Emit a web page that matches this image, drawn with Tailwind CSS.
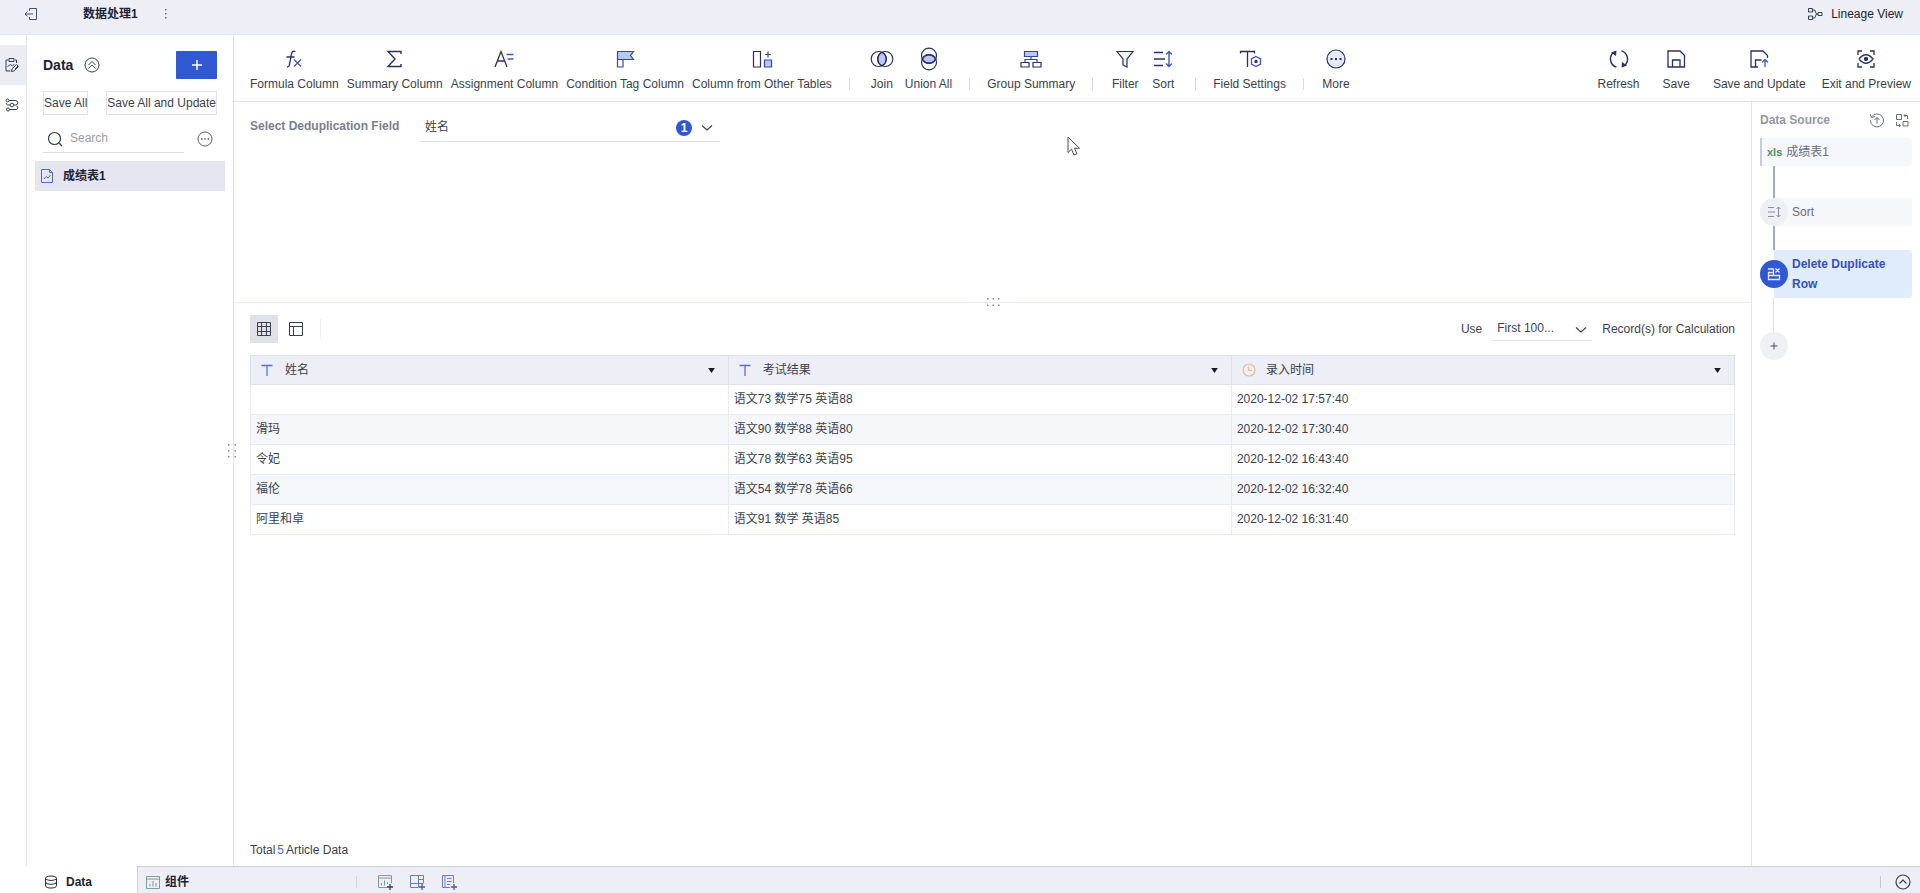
<!DOCTYPE html>
<html lang="zh-CN">
<head>
    <meta charset="UTF-8">
    <meta name="viewport" content="width=device-width, initial-scale=1.0">
    <title>数据处理1</title>
    <script src="https://cdn.jsdelivr.net/npm/@tailwindcss/browser@4"></script>
</head>
<body class="h-screen flex flex-col overflow-hidden bg-white text-xs text-[#3a3f50] font-['Liberation_Sans','Noto_Sans_CJK_SC',sans-serif]">

    <!-- Top Bar -->
    <header class="flex items-center h-[35px] pb-2.5 pt-1 shrink-0 bg-[#edeef6] border-b border-[#e3e5ec]">
        <button class="w-[62px] flex justify-center" aria-label="Back">
            <svg class="w-3.5 h-3.5" viewBox="0 0 14 14" fill="none" stroke="#4a4e5e"><path d="M5.5 4V1.5h7v11h-7V10M1 7h8M3.5 4.5L1 7l2.5 2.5"/></svg>
        </button>
        <h1 class="ml-[21px] font-bold text-[#1c2236]">数据处理1</h1>
        <button class="ml-[22px] w-3" aria-label="Menu">
            <svg class="w-3 h-3" viewBox="0 0 12 12" fill="#6a6e7c"><path d="M5 1h1.500v1.500H5zM5 5h1.500v1.500H5zM5 9h1.500v1.500H5z"/></svg>
        </button>
        <button class="ml-auto mr-[17px] flex items-center gap-2 text-[#1c2236]">
            <svg class="w-4 h-3.5" viewBox="0 0 16 14" fill="none" stroke="#3a3f50"><path d="M1.500 1.500h4v3.500h-4zM1.500 9h4v3.500h-4zM11 5.500h4v3h-4zM5.500 3H7q1.500 0 1.500 2T11 7M5.500 11H7q1.500 0 1.500-2T11 7"/></svg>
            Lineage View
        </button>
    </header>

    <div class="flex-1 flex min-h-0">
        <!-- Icon Rail -->
        <nav class="w-[27px] shrink-0 pt-2.5 border-r border-[#e3e5ec]">
            <button class="w-full h-10 pr-0.5 flex items-center justify-center bg-[#ebecf4]" aria-label="Edit data">
                <svg class="w-3.5 h-4" viewBox="0 0 14 16" fill="none" stroke="#3a3f50"><path d="M3.500 3H1v11h4.500M10 3h1.500v3M4 1.500h5v3H4zM2.500 9.500l3-2 2 1.500 2-2M6.500 14.500l.5-2.500 4.500-4.500 2 2-4.500 4.500zM10 12l3-3"/></svg>
            </button>
            <button class="w-full h-10 pr-0.5 flex items-center justify-center" aria-label="Data flow">
                <svg class="w-3.5 h-3.5" viewBox="0 0 14 14" fill="none" stroke="#3a3f50"><circle cx="2.500" cy="2.500" r="1.500"/><circle cx="7" cy="7" r="1.800"/><circle cx="3" cy="11.500" r="1.500"/><path d="M4 2.500h6.500a2.200 2.200 0 0 1 0 4.500H9M5 7H3a1.500 1.500 0 0 1-1.500-2M4.500 11.500h7a1.800 1.800 0 0 0 0-3.500"/></svg>
            </button>
        </nav>

        <!-- Sidebar -->
        <aside class="relative w-[207px] shrink-0 border-r border-[#e3e5ec]">
            <div class="flex items-center mt-4 mx-4">
                <h2 class="text-sm font-bold text-[#1c2236]">Data</h2>
                <button class="ml-[11px]" aria-label="Collapse">
                    <svg class="w-4 h-4" viewBox="0 0 16 16" fill="none" stroke="#3a3f50"><circle cx="8" cy="8" r="7"/><path d="M4.500 8L8 4.500 11.500 8M4.500 11.500L8 8l3.500 3.500"/></svg>
                </button>
                <button class="ml-auto w-[41px] h-7 flex items-center justify-center rounded-[1px] bg-[#3058d2]" aria-label="Add">
                    <svg class="w-3 h-3" viewBox="0 0 12 12" stroke="#fff" stroke-width="1.500"><path d="M6 1v10M1 6h10"/></svg>
                </button>
            </div>
            <div class="flex justify-between mt-3 mx-4 whitespace-nowrap">
                <button class="h-6 border border-[#dfe1e7]">Save All</button>
                <button class="h-6 border border-[#dfe1e7]">Save All and Update</button>
            </div>
            <div class="flex items-center mt-2.5 ml-4 mr-5">
                <label class="w-[141px] h-7 pl-1 flex items-center gap-[7px] border-b border-[#dcdee3]">
                    <svg class="w-4 h-4 shrink-0" viewBox="0 0 16 16" fill="none" stroke="#3a3f50" stroke-width="1.200"><circle cx="7.500" cy="7.500" r="6"/><path d="M12 12l3 3"/></svg>
                    <input type="text" placeholder="Search" aria-label="Search" class="w-full pb-0.5 outline-none placeholder:text-[#9a9da8]">
                </label>
                <button class="ml-auto" aria-label="More options">
                    <svg class="w-4 h-4" viewBox="0 0 16 16" fill="none" stroke="#5a5e6c"><circle cx="8" cy="8" r="7"/><path d="M4 8h1.500M7.200 8h1.500M10.500 8H12" stroke-width="1.500"/></svg>
                </button>
            </div>
            <a href="#" class="flex items-center gap-[9px] h-[30px] mt-2 mx-2 pl-[5px] bg-[#e4e5ee] font-bold text-[#1c2236]">
                <svg class="w-3.5 h-4" viewBox="0 0 14 16" fill="none" stroke="#5468cc"><path d="M1.500 1.500h8l3 3v10h-11zM9.500 1.500v3h3M4 11l2-2.500 2 1.500 2.500-3"/></svg>
                成绩表1
            </a>
            <!-- Resize grip -->
            <svg class="absolute -right-1 top-[408px] w-2.5 h-4" viewBox="0 0 10 16" fill="#8a8d98"><path d="M1 1h1.500v1.500H1zM1 7h1.500v1.500H1zM1 13h1.500v1.500H1zM7.500 1H9v1.500H7.500zM7.500 7H9v1.500H7.500zM7.500 13H9v1.500H7.500z"/></svg>
        </aside>

        <div class="flex-1 flex flex-col min-w-0">
            <!-- Toolbar -->
            <div class="flex items-end h-[67px] pb-[9px] pl-4 pr-[9px] shrink-0 border-b border-[#e3e5ec] whitespace-nowrap">
                <div class="flex gap-2">
                    <button class="min-w-[30px] flex flex-col items-center gap-[5px]">
                        <svg class="w-6 h-6" viewBox="0 0 24 24" fill="none" stroke="#2a3060" stroke-width="1.300"><path d="M13.500 4.500c-3-1-3.800.5-4.300 3.500L7.500 17.500q-.4 2.500-2.500 2.500M4.500 10h8"/><path d="M12 12.500l7 7M19 12.500l-7 7" stroke="#4058b8"/></svg>
                        Formula Column
                    </button>
                    <button class="min-w-[30px] flex flex-col items-center gap-[5px]">
                        <svg class="w-6 h-6" viewBox="0 0 24 24" fill="none" stroke="#2a3060" stroke-width="1.400"><path d="M18 7V4.500H5L12 12l-7 7.500h13V17"/></svg>
                        Summary Column
                    </button>
                    <button class="min-w-[30px] flex flex-col items-center gap-[5px]">
                        <svg class="w-6 h-6" viewBox="0 0 24 24" fill="none" stroke="#2a3060" stroke-width="1.300"><path d="M3 20L9 4.500 15 20M5.500 14h7.500"/><path d="M14.500 7.500h7M15.500 12h6" stroke="#4058b8"/></svg>
                        Assignment Column
                    </button>
                    <button class="min-w-[30px] flex flex-col items-center gap-[5px]">
                        <svg class="w-6 h-6" viewBox="0 0 24 24" fill="none" stroke="#39489c" stroke-width="1.200"><path d="M4.500 12.500v7.500H10v-7.500"/><path d="M4.500 4.500h16l-3 4 3 4h-16z" fill="#b9c8f8"/></svg>
                        Condition Tag Column
                    </button>
                    <button class="min-w-[30px] flex flex-col items-center gap-[5px]">
                        <svg class="w-6 h-6" viewBox="0 0 24 24" fill="none" stroke="#39489c" stroke-width="1.200"><path d="M3.500 4.500h7V20h-7z" stroke="#2a3060"/><path d="M14.500 13h7v7h-7z" fill="#b9c8f8"/><path d="M18 4.500v6M15 7.500h6"/></svg>
                        Column from Other Tables
                    </button>
                </div>
                <span class="w-px h-3 mb-0.5 mx-[17px] bg-[#d8dae2]"></span>
                <div class="flex gap-2">
                    <button class="min-w-[30px] flex flex-col items-center gap-[5px]">
                        <svg class="w-6 h-6" viewBox="0 0 24 24" fill="none" stroke="#2a3060" stroke-width="1.200"><path d="M12 5.200a7.500 7.500 0 0 1 0 13.600 7.500 7.500 0 0 1 0-13.600" fill="#b9c8f8"/><circle cx="8.700" cy="12" r="7.500"/><circle cx="15.300" cy="12" r="7.500"/></svg>
                        Join
                    </button>
                    <button class="min-w-[30px] flex flex-col items-center gap-[5px]">
                        <svg class="w-6 h-6" viewBox="0 0 24 24" fill="none" stroke="#2a3060" stroke-width="1.200"><path d="M5.200 12a7.500 7.500 0 0 1 13.600 0 7.500 7.500 0 0 1-13.600 0" fill="#b9c8f8"/><circle cx="12" cy="8.700" r="7.500"/><circle cx="12" cy="15.300" r="7.500"/></svg>
                        Union All
                    </button>
                </div>
                <span class="w-px h-3 mb-0.5 mx-[17px] bg-[#d8dae2]"></span>
                <button class="min-w-[30px] flex flex-col items-center gap-[5px]">
                    <svg class="w-6 h-6" viewBox="0 0 24 24" fill="none" stroke="#39489c" stroke-width="1.200"><path d="M5.500 4.500h13v5h-13z" fill="#b9c8f8"/><path d="M2 15.500h8V20H2zM14 15.500h8V20h-8z" stroke="#2a3060"/><path d="M12 9.500v3M6 15.500v-3h12v3"/></svg>
                    Group Summary
                </button>
                <span class="w-px h-3 mb-0.5 mx-[17px] bg-[#d8dae2]"></span>
                <div class="flex gap-2">
                    <button class="min-w-[30px] flex flex-col items-center gap-[5px]">
                        <svg class="w-6 h-6" viewBox="0 0 24 24" fill="none" stroke="#2a3060" stroke-width="1.200"><path d="M4 4.500h16l-6 7.500V20l-4-2v-6z" fill="#f0f3fe"/></svg>
                        Filter
                    </button>
                    <button class="min-w-[30px] flex flex-col items-center gap-[5px]">
                        <svg class="w-6 h-6" viewBox="0 0 24 24" fill="none" stroke="#2a3060" stroke-width="1.400"><path d="M3 5.500h9M3 12h11M3 18.500h9"/><path d="M18 5v14M15 7.500l3-3 3 3M15 16.500l3 3 3-3" stroke="#4058b8"/></svg>
                        Sort
                    </button>
                </div>
                <span class="w-px h-3 mb-0.5 mx-[17px] bg-[#d8dae2]"></span>
                <button class="min-w-[30px] flex flex-col items-center gap-[5px]">
                    <svg class="w-6 h-6" viewBox="0 0 24 24" fill="none" stroke="#2a3060" stroke-width="1.300"><path d="M2.500 6.500v-2h14v2M9.500 4.500V20"/><path d="M18 9.500l4.500 2.500v5L18 19.500 13.500 17v-5z" stroke="#4058b8"/><circle cx="18" cy="14.500" r="1" fill="#2a3060"/></svg>
                    Field Settings
                </button>
                <span class="w-px h-3 mb-0.5 mx-[17px] bg-[#d8dae2]"></span>
                <button class="min-w-[30px] flex flex-col items-center gap-[5px]">
                    <svg class="w-6 h-6" viewBox="0 0 24 24" fill="none" stroke="#2a3060" stroke-width="1.200"><circle cx="12" cy="12" r="9" fill="#e6ebfc"/><path d="M6.500 12h2M11 12h2M15.500 12h2" stroke-width="2"/></svg>
                    More
                </button>

                <div class="ml-auto flex gap-4">
                    <div class="flex gap-[23px]">
                        <button class="flex flex-col items-center gap-[5px]">
                            <svg class="w-6 h-6" viewBox="0 0 24 24" fill="none" stroke="#2a3060" stroke-width="1.400"><path d="M9.500 20.200A8.700 8.700 0 0 1 6 5.800M14.500 3.800A8.700 8.700 0 0 1 18 18.200"/><path d="M4 5.500L9.500 3.500 9 9zM20 18.500l-5.500 2 .5-5.500z" fill="#2a3060" stroke="none"/></svg>
                            Refresh
                        </button>
                        <button class="flex flex-col items-center gap-[5px]">
                            <svg class="w-6 h-6" viewBox="0 0 24 24" fill="none" stroke="#2a3060" stroke-width="1.300"><path d="M4 4h12l4.500 4.500V20H4zM8.500 20v-7h7.500v7"/></svg>
                            Save
                        </button>
                        <button class="flex flex-col items-center gap-[5px]">
                            <svg class="w-6 h-6" viewBox="0 0 24 24" fill="none" stroke="#2a3060" stroke-width="1.300"><path d="M11 20H4V4h12l4.500 4.500V11M8.500 20v-7h6"/><path d="M18 20v-7.500M15 15.500l3-3 3 3" stroke="#4058b8"/></svg>
                            Save and Update
                        </button>
                    </div>
                    <button class="flex flex-col items-center gap-[5px]">
                        <svg class="w-6 h-6" viewBox="0 0 24 24" fill="none" stroke="#2a3060" stroke-width="1.300"><path d="M4 8V4h4M16 4h4v4M20 16v4h-4M8 20H4v-4M5 12q7-8.500 14 0-7 8.500-14 0"/><circle cx="12" cy="12" r="1.500" fill="#2a3060"/></svg>
                        Exit and Preview
                    </button>
                </div>
            </div>

            <div class="flex-1 flex min-h-0">
                <main class="flex-1 flex flex-col min-w-0">
                    <!-- Deduplication Settings -->
                    <section class="relative h-[201px] shrink-0 pt-2.5 pl-4 border-b border-[#e8eaef]">
                        <div class="flex items-center">
                            <label for="dedupField" class="w-[170px] pb-0.5 font-bold text-[#7b7f8c]">Select Deduplication Field</label>
                            <div class="relative w-[300px]">
                                <select id="dedupField" class="appearance-none w-full h-[30px] pl-[5px] border-b border-[#dcdee3] outline-none">
                                    <option>姓名</option>
                                </select>
                                <div class="absolute right-1.5 top-2 flex items-center gap-2 pointer-events-none">
                                    <span class="w-4 h-4 rounded-full bg-[#3058d2] text-white font-bold text-center leading-4">1</span>
                                    <svg class="w-3.5 h-3.5" viewBox="0 0 14 14" fill="none" stroke="#3a3f50" stroke-width="1.200"><path d="M2 4.500L7 9l5-4.500"/></svg>
                                </div>
                            </div>
                        </div>
                        <!-- Mouse pointer -->
                        <svg class="absolute left-[833px] top-[34px] w-3.5 h-5" viewBox="0 0 14 20" fill="#fff" stroke="#4a4e5a"><path d="M1 1v15.500l3.500-3.300L7 19l3-1.200-2.500-5.600H12.500z"/></svg>
                        <!-- Resize grip -->
                        <svg class="absolute left-1/2 -translate-x-1/2 -bottom-[5px] w-3.5 h-2.5" viewBox="0 0 14 10" fill="#8a8d98"><path d="M1 1h1.500v1.500H1zM6.500 1H8v1.500H6.500zM12 1h1.500v1.500H12zM1 7.500h1.500V9H1zM6.500 7.500H8V9H6.500zM12 7.500h1.500V9H12z"/></svg>
                    </section>

                    <!-- Data Preview -->
                    <section class="flex-1 flex flex-col min-h-0 pt-3 px-4">
                        <div class="flex items-center h-7">
                            <button class="w-7 h-7 flex items-center justify-center bg-[#e1e2e7]" aria-label="Table view">
                                <svg class="w-4 h-4" viewBox="0 0 16 16" fill="none" stroke="#3a3f50"><path d="M1.500 1.500h13v13h-13zM1.500 5.500h13M1.500 10.500h13M5.500 1.500v13M10.500 1.500v13"/></svg>
                            </button>
                            <button class="w-7 h-7 ml-1 flex items-center justify-center" aria-label="Structure view">
                                <svg class="w-4 h-4" viewBox="0 0 16 16" fill="none" stroke="#3a3f50"><path d="M1.500 1.500h13v13h-13zM1.500 5.500h13M5.500 5.500v9"/></svg>
                            </button>
                            <span class="ml-2.5 w-px h-5 bg-[#eceef2]"></span>
                            <label for="recordLimit" class="ml-auto">Use</label>
                            <div class="relative w-[100px] mx-2.5">
                                <select id="recordLimit" class="appearance-none w-full h-6 pl-[5px] pb-0.5 border-b border-[#e2e4e9] outline-none">
                                    <option>First 100...</option>
                                </select>
                                <svg class="absolute right-1 top-1.5 w-3.5 h-3.5 pointer-events-none" viewBox="0 0 14 14" fill="none" stroke="#3a3f50" stroke-width="1.200"><path d="M2 4.500L7 9l5-4.500"/></svg>
                            </div>
                            <span>Record(s) for Calculation</span>
                        </div>

                        <table class="mt-3 w-full table-fixed border-collapse text-left">
                            <colgroup>
                                <col class="w-[32.200%]">
                                <col class="w-[33.900%]">
                                <col class="w-[33.900%]">
                            </colgroup>
                            <thead>
                                <tr class="h-[29px] bg-[#edeef6]">
                                    <th class="border border-[#dfe1ea] font-normal px-2.5">
                                        <div class="flex items-center">
                                            <svg class="w-3 h-3 mr-3" viewBox="0 0 12 12" fill="none" stroke="#5a70c8" stroke-width="1.300"><path d="M.5 1.500h11M6 1.500V12"/></svg>
                                            姓名
                                            <svg class="w-[7px] h-[5px] ml-auto mr-[3px]" viewBox="0 0 8 6" fill="#15192a"><path d="M0 0h8L4 6z"/></svg>
                                        </div>
                                    </th>
                                    <th class="border border-[#dfe1ea] font-normal px-2.5">
                                        <div class="flex items-center">
                                            <svg class="w-3 h-3 mr-3" viewBox="0 0 12 12" fill="none" stroke="#5a70c8" stroke-width="1.300"><path d="M.5 1.500h11M6 1.500V12"/></svg>
                                            考试结果
                                            <svg class="w-[7px] h-[5px] ml-auto mr-[3px]" viewBox="0 0 8 6" fill="#15192a"><path d="M0 0h8L4 6z"/></svg>
                                        </div>
                                    </th>
                                    <th class="border border-[#dfe1ea] font-normal px-2.5">
                                        <div class="flex items-center">
                                            <svg class="w-3.5 h-3.5 mr-2.5" viewBox="0 0 14 14" fill="none" stroke="#e6bd92" stroke-width="1.200"><circle cx="7" cy="7" r="6"/><path d="M6.500 3.500v4h3.500"/></svg>
                                            录入时间
                                            <svg class="w-[7px] h-[5px] ml-auto mr-[3px]" viewBox="0 0 8 6" fill="#15192a"><path d="M0 0h8L4 6z"/></svg>
                                        </div>
                                    </th>
                                </tr>
                            </thead>
                            <tbody>
                                <tr class="h-[30px]">
                                    <td class="border border-[#e8eaef] px-[5px] pb-0.5"></td>
                                    <td class="border border-[#e8eaef] px-[5px] pb-0.5">语文73 数学75 英语88</td>
                                    <td class="border border-[#e8eaef] px-[5px] pb-0.5">2020-12-02 17:57:40</td>
                                </tr>
                                <tr class="h-[30px] bg-[#f6f7fb]">
                                    <td class="border border-[#e8eaef] px-[5px] pb-0.5">滑玛</td>
                                    <td class="border border-[#e8eaef] px-[5px] pb-0.5">语文90 数学88 英语80</td>
                                    <td class="border border-[#e8eaef] px-[5px] pb-0.5">2020-12-02 17:30:40</td>
                                </tr>
                                <tr class="h-[30px]">
                                    <td class="border border-[#e8eaef] px-[5px] pb-0.5">令妃</td>
                                    <td class="border border-[#e8eaef] px-[5px] pb-0.5">语文78 数学63 英语95</td>
                                    <td class="border border-[#e8eaef] px-[5px] pb-0.5">2020-12-02 16:43:40</td>
                                </tr>
                                <tr class="h-[30px] bg-[#f6f7fb]">
                                    <td class="border border-[#e8eaef] px-[5px] pb-0.5">福伦</td>
                                    <td class="border border-[#e8eaef] px-[5px] pb-0.5">语文54 数学78 英语66</td>
                                    <td class="border border-[#e8eaef] px-[5px] pb-0.5">2020-12-02 16:32:40</td>
                                </tr>
                                <tr class="h-[30px]">
                                    <td class="border border-[#e8eaef] px-[5px] pb-0.5">阿里和卓</td>
                                    <td class="border border-[#e8eaef] px-[5px] pb-0.5">语文91 数学 英语85</td>
                                    <td class="border border-[#e8eaef] px-[5px] pb-0.5">2020-12-02 16:31:40</td>
                                </tr>
                            </tbody>
                        </table>

                        <p class="mt-auto mb-2 flex gap-0.5">Total <span class="text-[#5468cc]">5</span> Article Data</p>
                    </section>
                </main>

                <!-- Data Source Steps -->
                <aside class="w-[169px] shrink-0 pt-2.5 px-2 border-l border-[#e3e5ec]">
                    <div class="flex items-center h-4">
                        <h2 class="font-bold text-[#9598a3]">Data Source</h2>
                        <button class="ml-auto mr-2.5" aria-label="Refresh source">
                            <svg class="w-4 h-4" viewBox="0 0 16 16" fill="none" stroke="#6a6e7c"><path d="M2.500 5A6.500 6.500 0 1 1 1.500 8.500M1 2l1.500 3.500L6 4.500M8 11.500v-6M5.500 8L8 5.500 10.500 8"/></svg>
                        </button>
                        <button class="mr-[3px]" aria-label="Switch layout">
                            <svg class="w-3.5 h-3.5" viewBox="0 0 14 14" fill="none" stroke="#6a6e7c"><path d="M1.500 1.500h5v5h-5zM8 8.500h5v4.500H8zM9 2.500h3.500V6M10.500 1L9 2.500 10.500 4M1.500 9v3.500h4M4 11l1.500 1.500L4 14"/></svg>
                        </button>
                    </div>

                    <a href="#" class="flex items-center gap-1 h-7 mt-2.5 pl-[5px] rounded-r bg-[#f6f7fa] border-l-2 border-[#c8cbd8] text-[#6a6e7c]">
                        <span class="text-[11px] font-bold text-[#4c9160]">xls</span>成绩表1
                    </a>
                    <div class="ml-[13px] w-0.5 h-8 bg-[#a3a8d2]"></div>
                    <a href="#" class="flex items-center gap-1 h-7 rounded-l-full rounded-r bg-[#f6f7fa] text-[#6a6e7c]">
                        <span class="w-7 h-7 flex items-center justify-center rounded-full bg-[#eeeff3]">
                            <svg class="w-3.5 h-3.5" viewBox="0 0 14 14" fill="none" stroke="#8a8d98"><path d="M1 2.500h6M1 7h7M1 11.500h6M11.500 2v10M9.500 4l2-2 2 2M9.500 10l2 2 2-2"/></svg>
                        </span>
                        Sort
                    </a>
                    <div class="ml-[13px] w-0.5 h-6 bg-[#a3a8d2]"></div>
                    <a href="#" class="flex items-center">
                        <span class="relative w-7 h-7 shrink-0 flex items-center justify-center rounded-full bg-[#3058d2]">
                            <svg class="w-3.5 h-3.5" viewBox="0 0 14 14" fill="none" stroke="#e6ebfc" stroke-width="1.300"><path d="M1 2h5.500v3.500H1.500V8.500M1.500 8.500h11v4h-11zM8.500 1.500l4 4M12.500 1.500l-4 4M6.500 5.500v3"/></svg>
                        </span>
                        <span class="-ml-3.5 pl-[18px] flex-1 py-1 rounded-r bg-[#e0ebfc] font-bold leading-5 text-[#3450b8]">Delete Duplicate Row</span>
                    </a>
                    <div class="ml-[13px] w-px h-[34px] bg-[#e0e2e8]"></div>
                    <button class="w-7 h-7 flex items-center justify-center rounded-full bg-[#eff0f3]" aria-label="Add step">
                        <svg class="w-2 h-2" viewBox="0 0 8 8" stroke="#4a4e5a"><path d="M4 .5v7M.5 4h7"/></svg>
                    </button>
                </aside>
            </div>
        </div>
    </div>

    <!-- Bottom Tabs -->
    <footer class="flex h-[27px] shrink-0">
        <button class="w-[137px] pl-11 pt-1 flex items-center gap-2 text-[#1c2236] font-bold">
            <svg class="w-3.5 h-3.5" viewBox="0 0 14 14" fill="none" stroke="#2a2e3e"><ellipse cx="7" cy="3.200" rx="5.500" ry="2.200"/><path d="M1.500 3.200v7.600c0 3 11 3 11 0V3.200M1.500 7c0 3 11 3 11 0"/></svg>
            Data
        </button>
        <div class="flex-1 flex items-center pl-2 pt-[3px] pr-[9px] bg-[#edeef6] border-t border-l border-[#cdd1df]">
            <button class="flex items-center gap-[5px] font-bold text-[#1c2236]">
                <svg class="w-3.5 h-3.5" viewBox="0 0 14 14" fill="none" stroke="#7f9c96"><path d="M.5 1.500h13v12H.5zM.5 4h13M4 11.500V9M7 11.500V6M10 11.500V8"/></svg>
                组件
            </button>
            <span class="ml-[167px] w-px h-3 bg-[#d3d6df]"></span>
            <div class="flex ml-5 gap-4">
                <button aria-label="Add component">
                    <svg class="w-4 h-4" viewBox="0 0 16 16" fill="none" stroke="#7f9c96"><path d="M10 13.500H1.500v-12h13V9M1.500 4h13M4.500 11.500V9M7.500 11.500V6.500M10.500 10V8"/><path d="M13 10v6M10 13h6" stroke="#3a3f50" stroke-width="1.300"/></svg>
                </button>
                <button aria-label="Add dashboard">
                    <svg class="w-4 h-4" viewBox="0 0 16 16" fill="none" stroke="#6c79c4"><path d="M9 13.500H1.500v-12h13V9M9.500 1.500v12M9.500 5.500h5M1.500 9.500h13"/><path d="M13 10v6M10 13h6" stroke="#4a58a8" stroke-width="1.300"/></svg>
                </button>
                <button aria-label="Add report">
                    <svg class="w-4 h-4" viewBox="0 0 16 16" fill="none" stroke="#6c79c4"><path d="M9 13.500H1.500v-12h11V9M4 1.500v12M6 4.500h4.500M6 7.500h4.500M6 10.500h3"/><path d="M13 10v6M10 13h6" stroke="#4a58a8" stroke-width="1.300"/></svg>
                </button>
            </div>
            <span class="ml-auto w-px h-3 bg-[#c5c8d2]"></span>
            <button class="ml-3.5" aria-label="Expand">
                <svg class="w-4 h-4" viewBox="0 0 16 16" fill="none" stroke="#3a3f50" stroke-width="1.200"><circle cx="8" cy="8" r="7"/><path d="M4.500 9.500L8 6l3.500 3.500"/></svg>
            </button>
        </div>
    </footer>
</body>
</html>
